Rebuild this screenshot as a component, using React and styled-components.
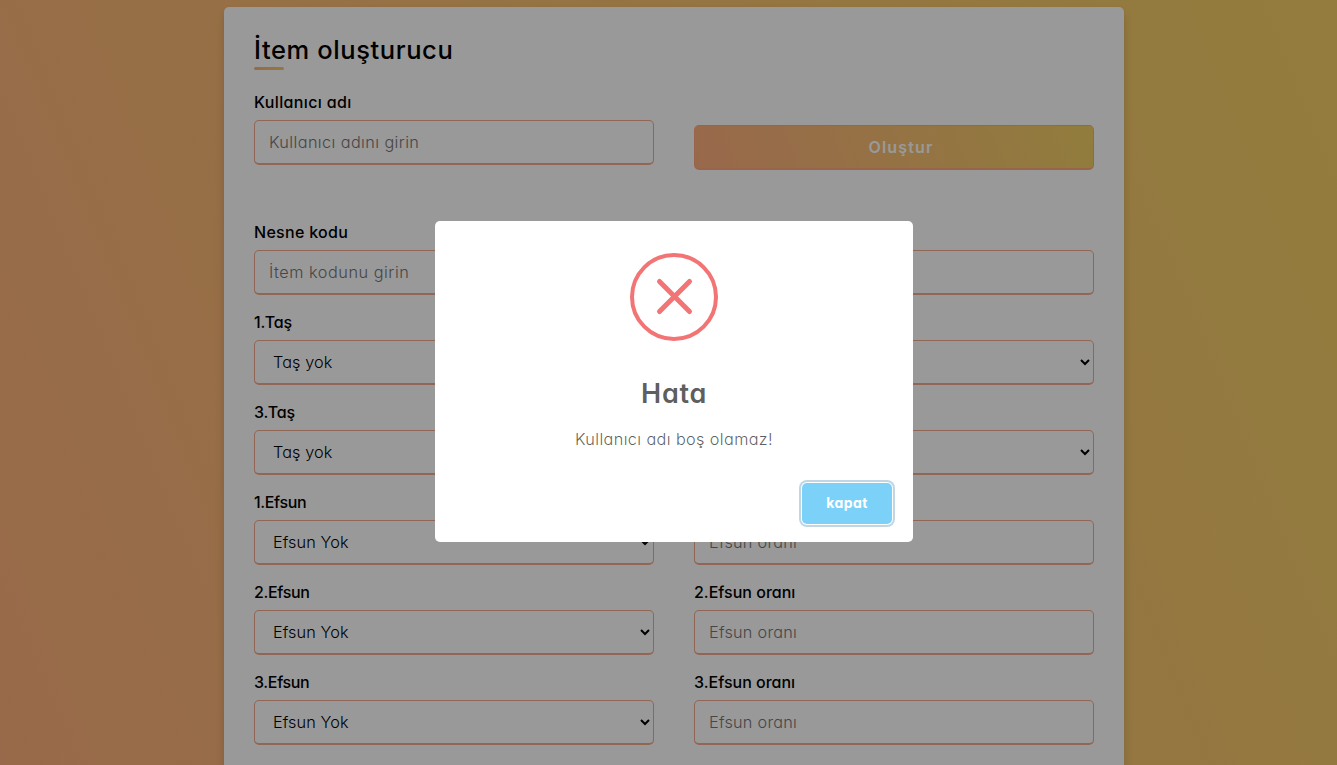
import React from 'react';
import styled, {createGlobalStyle} from 'styled-components';

const GlobalStyle = createGlobalStyle`
    * {
        margin: 0;
        padding: 0;
        box-sizing: border-box;
        font-family: Inter, "Open Sans", sans-serif;
        font-feature-settings: "cv11";
    }

    html, body {
        height: 765px;
        overflow: hidden;
    }
`;

const Page = styled.div`
    display: flex;
    justify-content: center;
    width: 1348px;
    height: 765px;
    padding-top: 7px;
    overflow: hidden;
    background: linear-gradient(68deg, #feb07c, #f5d066);
`;

const Container = styled.div`
    width: 900px;
    height: 900px;
    flex-shrink: 0;
    padding: 25px 30px;
    border-radius: 5px;
    background: #fff;
    box-shadow: 0 5px 10px rgba(0, 0, 0, .15);
`;

const Title = styled.h1`
    height: 38px;
    font-size: 25.5px;
    line-height: 36px;
    font-weight: 450;
    letter-spacing: .6px;

    &::after {
        content: "";
        display: block;
        width: 30px;
        height: 3px;
        margin-top: -1px;
        border-radius: 5px;
        background: linear-gradient(68deg, #f8b27c, #f5c968);
    }
`;

const Form = styled.form`
    display: grid;
    grid-template-columns: 400px 400px;
    column-gap: 40px;
    row-gap: 16px;
    margin-top: 20px;
`;

const Field = styled.div`
    height: 75px;
    margin-bottom: ${p => p.$spaced ? '39px' : '-1px'};
`;

const Label = styled.label`
    display: block;
    min-height: 24px;
    margin-bottom: 6px;
    font-size: 16px;
    line-height: 24px;
    font-weight: 500;
    letter-spacing: ${p => p.$spacing || 0}px;
`;

const Input = styled.input`
    width: 100%;
    height: 45px;
    padding-left: 14px;
    border: 1px solid #f2aa8c;
    border-bottom-width: 2px;
    border-radius: 5px;
    outline: none;
    background: #fff;
    font-size: 16.25px;
    font-weight: 300;
    letter-spacing: ${p => p.$spacing || .25}px;
`;

const Select = styled.select`
    width: 100%;
    height: 45px;
    padding-left: 14px;
    border: 1px solid #f2aa8c;
    border-bottom-width: 2px;
    border-radius: 5px;
    outline: none;
    background: #fff;
    color: #000;
    font-size: 16.25px;
    font-weight: 300;
    letter-spacing: .1px;
`;

const CreateButton = styled.button`
    width: 100%;
    height: 45px;
    margin-top: 35px;
    padding-left: 14px;
    border: 1px solid #ffa97c;
    border-bottom-width: 2px;
    border-radius: 5px;
    background: linear-gradient(68deg, #ffae7e, #f2d066);
    color: #fff;
    font-size: 16px;
    font-weight: 600;
    letter-spacing: 1.15px;
`;

const Overlay = styled.div`
    position: fixed;
    top: 0;
    left: 0;
    display: flex;
    align-items: center;
    justify-content: center;
    width: 1348px;
    height: 763px;
    background: rgba(0, 0, 0, .4);
    box-shadow: 0 2px rgba(0, 0, 0, .4);
`;

const Modal = styled.div`
    display: flex;
    flex-direction: column;
    align-items: center;
    width: 478px;
    height: 321px;
    border-radius: 5px;
    background: #fff;
`;

const ErrorIcon = styled.svg`
    width: 88px;
    height: 88px;
    margin-top: 32px;
    fill: none;
    stroke: #f27474;
`;

const ModalTitle = styled.h2`
    margin-top: 33px;
    color: rgba(0, 0, 0, .65);
    font-size: 27px;
    line-height: 40px;
    font-weight: 600;
    letter-spacing: .7px;
`;

const ModalText = styled.p`
    margin-top: 13px;
    color: rgba(0, 0, 0, .64);
    font-size: 16.25px;
    line-height: 24px;
    font-weight: 300;
    letter-spacing: .38px;
`;

const CloseButton = styled.button`
    align-self: flex-end;
    width: 90px;
    height: 41px;
    margin: 32px 21px 0 0;
    padding-bottom: 2px;
    border: none;
    border-radius: 5px;
    background: #7cd1f9;
    box-shadow: 0 0 0 1px #fff, 0 0 0 3px rgba(43, 114, 165, .29);
    color: #fff;
    font-size: 14px;
    font-weight: 700;
    letter-spacing: .4px;
`;

const TextField = ({label, labelSpacing, placeholder, spacing, spaced}) => (
    <Field $spaced={spaced}>
        <Label $spacing={labelSpacing}>{label}</Label>
        <Input type="text" placeholder={placeholder} $spacing={spacing}/>
    </Field>
);

const SelectField = ({label, labelSpacing, option}) => (
    <Field>
        <Label $spacing={labelSpacing}>{label}</Label>
        <Select>
            {option && <option>{option}</option>}
        </Select>
    </Field>
);

const App = () => {

    const stones = [1, 3];
    const bonuses = [1, 2, 3];

    return (<>
        <GlobalStyle/>
        <Page>
            <Container>
                <Title>İtem oluşturucu</Title>
                <Form>
                    <TextField label="Kullanıcı adı" labelSpacing={.36} placeholder="Kullanıcı adını girin" spacing={.4} spaced/>
                    <Field>
                        <CreateButton type="button">Oluştur</CreateButton>
                    </Field>
                    <TextField label="Nesne kodu" labelSpacing={.3} placeholder="İtem kodunu girin" spacing={.53}/>
                    <TextField/>
                    {stones.map(n => <React.Fragment key={n}>
                        <SelectField label={`${n}.Taş`} labelSpacing={-.15} option="Taş yok"/>
                        <SelectField/>
                    </React.Fragment>)}
                    {bonuses.map(n => <React.Fragment key={n}>
                        <SelectField label={`${n}.Efsun`} labelSpacing={-.35} option="Efsun Yok"/>
                        <TextField label={n > 1 ? `${n}.Efsun oranı` : ''} placeholder="Efsun oranı"/>
                    </React.Fragment>)}
                </Form>
            </Container>
        </Page>
        <Overlay>
            <Modal>
                <ErrorIcon viewBox="0 0 88 88">
                    <circle cx="44" cy="44" r="42" strokeWidth="4"/>
                    <path d="M29.5 28.5l30 30M59.5 28.5l-30 30" strokeWidth="5" strokeLinecap="round"/>
                </ErrorIcon>
                <ModalTitle>Hata</ModalTitle>
                <ModalText>Kullanıcı adı boş olamaz!</ModalText>
                <CloseButton>kapat</CloseButton>
            </Modal>
        </Overlay>
    </>);
}

export default App;
